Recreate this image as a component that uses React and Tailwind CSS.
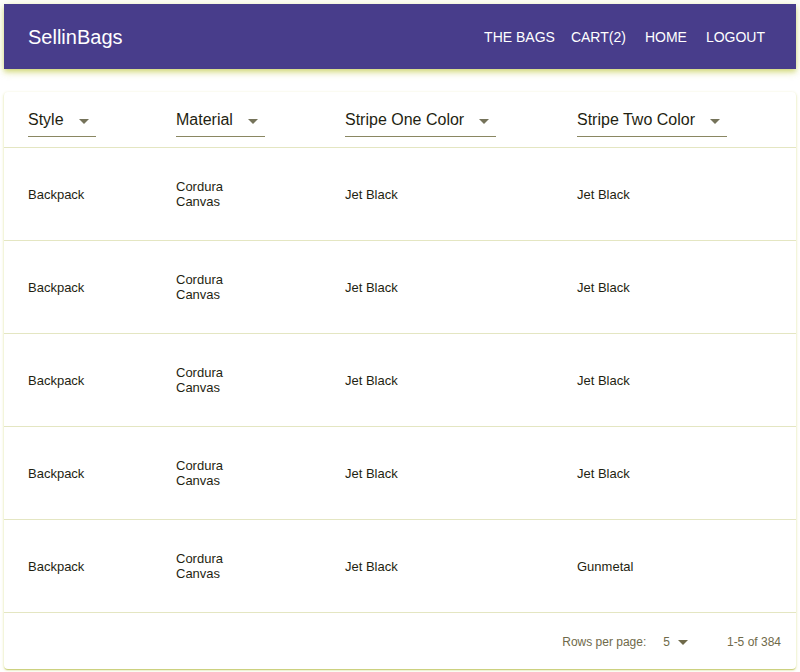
import React from 'react';

const rows = [
  ['Backpack', 'Cordura Canvas', 'Jet Black', 'Jet Black'],
  ['Backpack', 'Cordura Canvas', 'Jet Black', 'Jet Black'],
  ['Backpack', 'Cordura Canvas', 'Jet Black', 'Jet Black'],
  ['Backpack', 'Cordura Canvas', 'Jet Black', 'Jet Black'],
  ['Backpack', 'Cordura Canvas', 'Jet Black', 'Gunmetal'],
];

const Arrow = ({ className = '' }) => (
  <svg viewBox="0 0 24 24" className={className} fill="currentColor">
    <path d="M7 10l5 5 5-5z" />
  </svg>
);

const FilterSelect = ({ label }) => (
  <div className="relative inline-flex items-center border-b border-[#8a8762] pt-[6px] pb-[7px] pr-[32px] text-[16px] leading-[19px] text-[#1f1f12]">
    {label}
    <Arrow className="absolute right-0 top-[calc(50%-11px)] w-6 h-6 text-[#75735a]" />
  </div>
);

const grid = 'grid grid-cols-[148px_169px_232px_1fr]';

export default function App() {
  return (
    <div className="min-h-screen bg-white p-1 font-['Liberation_Sans',Arial,sans-serif]">
      <header className="h-[65px] bg-[#483d8b] flex items-center pl-6 pr-[23px] shadow-[0_2px_4px_-1px_rgba(190,200,60,0.45),0_4px_5px_0_rgba(190,200,60,0.32),0_1px_10px_0_rgba(190,200,60,0.3)]">
        <h1 className="text-white text-[20px] leading-none">SellinBags</h1>
        <nav className="ml-auto flex items-center">
          {['THE BAGS', 'CART(2)', 'HOME', 'LOGOUT'].map((item) => (
            <button key={item} className="min-w-16 px-2 py-1.5 text-white text-[14px] leading-[24px] text-center">{item}</button>
          ))}
        </nav>
      </header>

      <div className="mt-[23px] bg-white rounded-[4px] shadow-[0_1px_3px_0_rgba(190,200,60,0.45),0_1px_1px_0_rgba(190,200,60,0.3),0_2px_1px_-1px_rgba(140,140,60,0.35)]">
        <div className={`${grid} h-[56px] items-center border-b border-[#e4e6c2]`}>
          {['Style', 'Material', 'Stripe One Color', 'Stripe Two Color'].map((h) => (
            <div key={h} className="pl-6 pt-[1px]">
              <FilterSelect label={h} />
            </div>
          ))}
        </div>

        {rows.map((r, i) => (
          <div key={i} className={`${grid} h-[93px] items-center border-b border-[#e4e6c2] text-[13px] leading-[15px] text-[#1f1f12]`}>
            {r.map((c, j) => (
              <div key={j} className={`pl-6 ${j === 1 ? 'w-[80px]' : ''}`}>{c}</div>
            ))}
          </div>
        ))}

        <div className="h-[56px] pt-[2px] flex items-center justify-end pr-[15px] text-[12px] text-[#6f6a4a]">
          <span>Rows per page:</span>
          <span className="ml-[17px] flex items-center">
            5
            <Arrow className="ml-[1px] w-6 h-6 text-[#6f6a4a]" />
          </span>
          <span className="ml-[32px]">1-5 of 384</span>
        </div>
      </div>
    </div>
  );
}
